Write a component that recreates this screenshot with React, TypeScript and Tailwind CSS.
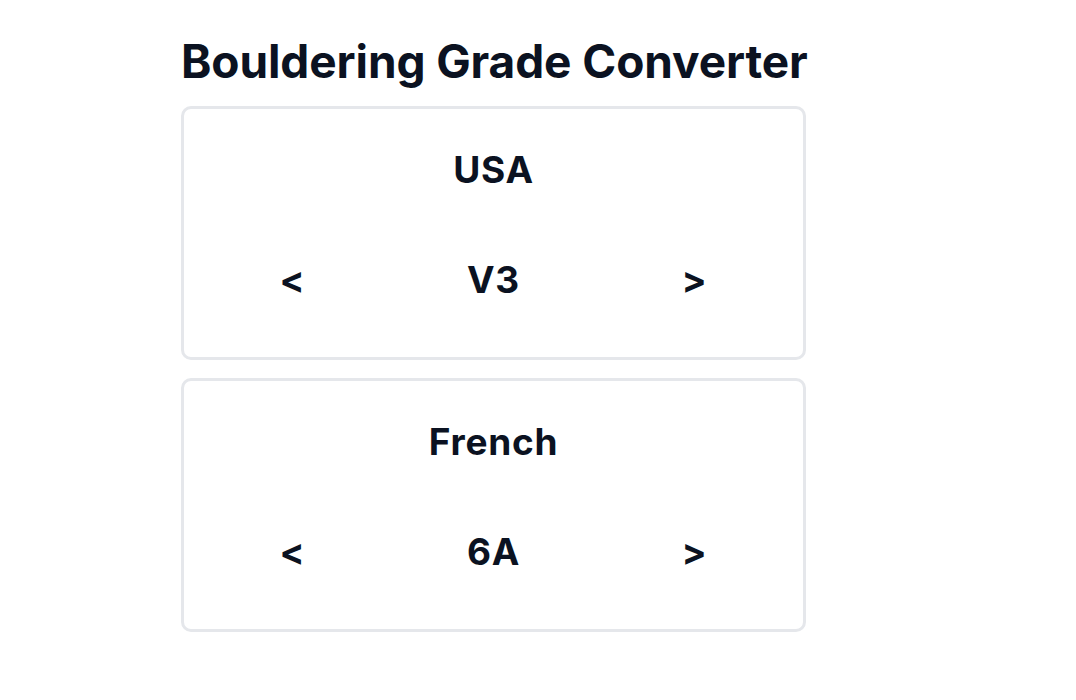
import React, { useState } from 'react'

const usaGrades = ['VB', 'V0', 'V1', 'V2', 'V3', 'V4', 'V5', 'V6', 'V7', 'V8', 'V9', 'V10']
const frenchGrades = ['3', '4', '5', '5+', '6A', '6B', '6C', '7A', '7A+', '7B', '7C', '8A']

type GradeCardProps = {
  title: string
  value: string
  onPrev: () => void
  onNext: () => void
}

const GradeCard: React.FC<GradeCardProps> = ({ title, value, onPrev, onNext }) => (
  <div className="border-[3px] border-[#e5e7eb] rounded-[10px] pt-[41px] pb-[57px] px-[8px]">
    <h2 className="text-center text-[37px] leading-10 font-bold tracking-[0.02em]">{title}</h2>
    <div className="mt-[70px] grid grid-cols-3 items-center text-[37px] leading-10 font-bold tracking-[0.02em]">
      <button className="justify-self-center cursor-pointer" onClick={onPrev}>
        &lt;
      </button>
      <span className="justify-self-center">{value}</span>
      <button className="justify-self-center cursor-pointer" onClick={onNext}>
        &gt;
      </button>
    </div>
  </div>
)

export default function App() {
  const [idx, setIdx] = useState(4)
  const prev = () => setIdx((i) => Math.max(0, i - 1))
  const next = () => setIdx((i) => Math.min(usaGrades.length - 1, i + 1))

  return (
    <div className="min-h-screen bg-white text-[#0b1221] font-['Inter','Noto_Sans',sans-serif]">
      <div className="ml-[181px] w-[625px] pt-[37px]">
        <h1 className="text-[46px] leading-[48px] font-bold tracking-[-0.1px] whitespace-nowrap">
          Bouldering Grade Converter
        </h1>
        <div className="mt-[21px] flex flex-col gap-[18px]">
          <GradeCard title="USA" value={usaGrades[idx]} onPrev={prev} onNext={next} />
          <GradeCard title="French" value={frenchGrades[idx]} onPrev={prev} onNext={next} />
        </div>
      </div>
    </div>
  )
}
